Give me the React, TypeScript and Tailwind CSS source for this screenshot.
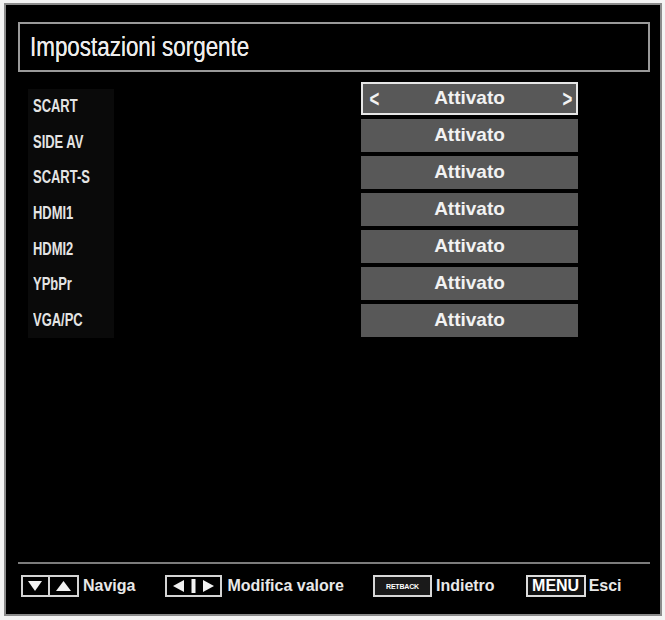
import React from "react";

const sources = ["SCART", "SIDE AV", "SCART-S", "HDMI1", "HDMI2", "YPbPr", "VGA/PC"];

// no narrow font installed, so the condensed TV look is done with scale-x
const sans = { fontFamily: '"Liberation Sans", Arial, sans-serif' };

const UpDownKeys = () => (
  <svg width="58" height="22" viewBox="0 0 58 22">
    <rect x="1" y="1" width="56" height="20" fill="#000" stroke="#d4d4d4" strokeWidth="2" />
    <line x1="28" y1="1" x2="28" y2="21" stroke="#d4d4d4" strokeWidth="2" />
    <polygon points="7,6 21,6 14,16" fill="#f2f2f2" />
    <polygon points="35,16 50,16 42.5,6" fill="#f2f2f2" />
  </svg>
);

const LeftRightKeys = () => (
  <svg width="57" height="22" viewBox="0 0 57 22">
    <rect x="1" y="1" width="55" height="20" fill="#000" stroke="#d4d4d4" strokeWidth="2" />
    <polygon points="19,5 19,17 8,11" fill="#f2f2f2" />
    <rect x="26.5" y="4" width="4" height="14" fill="#f2f2f2" />
    <polygon points="38,5 38,17 49,11" fill="#f2f2f2" />
  </svg>
);

export default function App() {
  return (
    <div className="w-[665px] h-[620px] bg-[#f4f4f4] pt-[3px] pl-[4px]">
      <div className="w-[658px] h-[613px] border-2 border-[#8c8c8c] bg-black flex flex-col">
        {/* title */}
        <div className="mt-[17px] ml-[12px] mr-[10px] h-[50px] border-2 border-[#9a9a9a] flex items-center pl-[10px]">
          <span
            className="inline-block origin-left scale-x-[0.83] text-[27px] leading-none text-[#ececec] [text-shadow:0_0_0.5px_#ececec]"
            style={sans}
          >
            Impostazioni sorgente
          </span>
        </div>

        {/* list */}
        <div className="flex items-start">
          <div className="ml-[22px] mt-[17px] w-[86px] bg-[#0a0a0a] flex flex-col">
            {sources.map((s) => (
              <div key={s} className="h-[35.6px] flex items-center pl-[5px]">
                <span
                  className="inline-block origin-left scale-x-[0.72] text-[18px] font-bold text-[#e4e4e4]"
                  style={sans}
                >
                  {s}
                </span>
              </div>
            ))}
          </div>

          <div className="ml-[247px] mt-[10px] flex flex-col gap-[4px]">
            {sources.map((s, i) => (
              <div
                key={s}
                className={`w-[217px] h-[33px] bg-[#585858] flex items-center text-[19px] font-bold text-[#f2f2f2] ${
                  i === 0 ? "border-2 border-[#e6e6e6] px-[5px]" : "px-[7px]"
                }`}
                style={sans}
              >
                <span
                  className={`w-[10px] inline-block scale-x-[0.7] text-[24px] leading-none font-bold ${i === 0 ? "" : "invisible"}`}
                >
                  &lt;
                </span>
                <span className="flex-1 text-center">Attivato</span>
                <span
                  className={`w-[10px] inline-block scale-x-[0.7] text-[24px] leading-none font-bold ${i === 0 ? "" : "invisible"}`}
                >
                  &gt;
                </span>
              </div>
            ))}
          </div>
        </div>

        {/* footer */}
        <div className="mt-auto ml-[12px] mr-[10px] h-[2px] bg-[#7c7c7c]" />
        <div className="mt-[11px] mb-[17px] h-[22px] pl-[15px] flex items-center text-[16px] font-bold text-[#e8e8e8]" style={sans}>
          <UpDownKeys />
          <span className="ml-[4px]">Naviga</span>

          <div className="ml-[30px]">
            <LeftRightKeys />
          </div>
          <span className="ml-[5px]">Modifica valore</span>

          <div className="ml-[29px] w-[59px] h-[22px] border-2 border-[#d8d8d8] bg-[#1a1a1a] flex items-center justify-center">
            <span className="text-[7px] leading-none font-bold tracking-[-0.2px] text-white">RETBACK</span>
          </div>
          <span className="ml-[4px]">Indietro</span>

          <div className="ml-[31px] w-[60px] h-[22px] border-2 border-[#dcdcdc] bg-[#111] flex items-center justify-center">
            <span className="text-[16px] leading-none font-bold text-white">MENU</span>
          </div>
          <span className="ml-[3px]">Esci</span>
        </div>
      </div>
    </div>
  );
}
